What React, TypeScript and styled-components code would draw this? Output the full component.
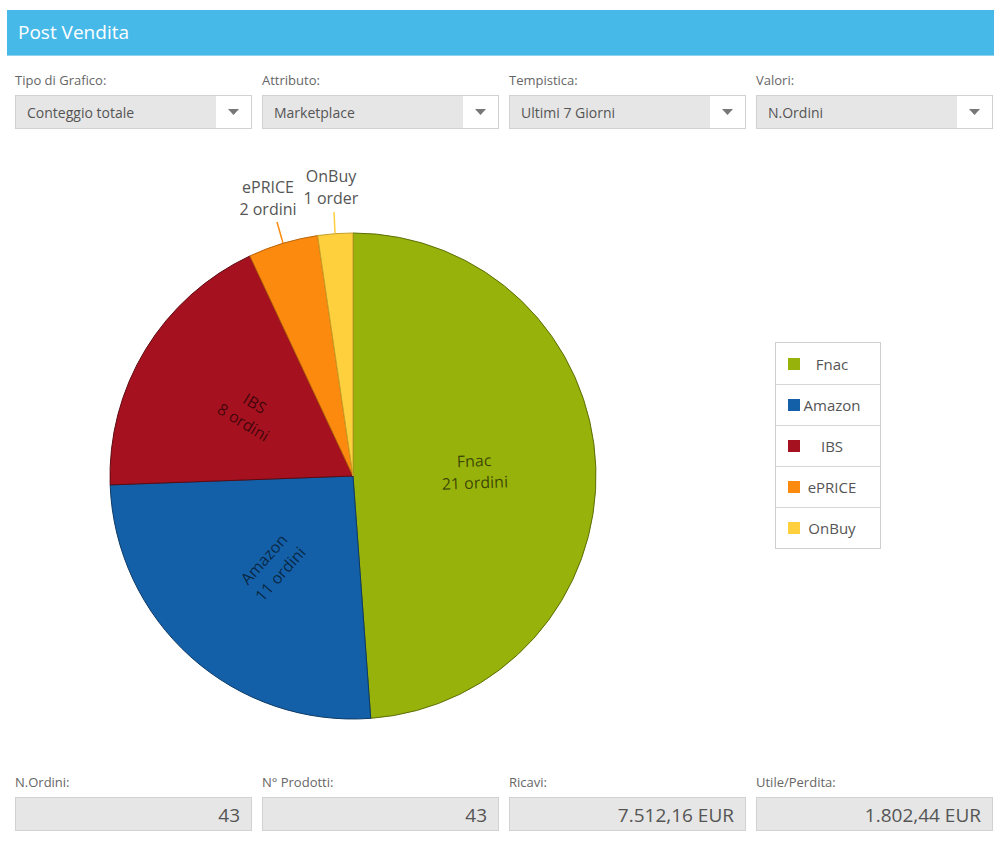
import React from "react";
import styled, { createGlobalStyle } from "styled-components";

const GlobalStyle = createGlobalStyle`
  html, body { margin: 0; padding: 0; background: #ffffff; }
  body { font-family: "Open Sans", "Noto Sans", "Liberation Sans", sans-serif; }
  * { box-sizing: border-box; }
`;

const Page = styled.div`
  width: 1000px;
  height: 848px;
  padding: 10px 6px 0 7px;
  overflow: hidden;
`;

const Header = styled.div`
  height: 46px;
  background: #47b9e8;
  border-bottom: 1px solid #8fd3ef;
  color: #ffffff;
  font-size: 19px;
  line-height: 45px;
  padding-left: 11px;
`;

const FieldGrid = styled.div<{ $top: number }>`
  display: grid;
  grid-template-columns: repeat(4, 1fr);
  column-gap: 10px;
  padding: 0 1px 0 8px;
  margin-top: ${(p) => p.$top}px;
`;

const Field = styled.div`
  display: flex;
  flex-direction: column;
  gap: 6px;
`;

const FieldLabel = styled.div`
  font-size: 13px;
  line-height: 18px;
  color: #666666;
`;

const SelectBox = styled.div`
  height: 34px;
  display: flex;
  border: 1px solid #d2d2d2;
  background: #e6e6e6;
`;

const SelectText = styled.div`
  flex: 1;
  font-size: 14px;
  line-height: 34px;
  color: #555555;
  padding-left: 11px;
`;

const SelectArrow = styled.div`
  width: 35px;
  background: #ffffff;
  display: flex;
  align-items: center;
  justify-content: center;
`;

const ValueBox = styled.div`
  height: 34px;
  border: 1px solid #d2d2d2;
  background: #e6e6e6;
  font-size: 19px;
  line-height: 34px;
  color: #555555;
  text-align: right;
  padding-right: 11px;
`;

const ChartArea = styled.div`
  height: 644px;
  display: flex;
  align-items: flex-start;
`;

const ChartSvg = styled.svg`
  display: block;
  flex: none;
`;

const Legend = styled.div`
  margin-top: 213px;
  margin-left: 28px;
  width: 106px;
  border: 1px solid #cfcfcf;
  display: flex;
  flex-direction: column;
`;

const LegendRow = styled.div`
  height: 41px;
  display: flex;
  align-items: center;
  padding: 0 16px 0 12px;
  border-top: 1px solid #d6d6d6;
  &:first-child { border-top: none; }
`;

const Swatch = styled.span<{ $color: string }>`
  width: 12px;
  height: 12px;
  background: ${(p) => p.$color};
  flex: none;
`;

const LegendText = styled.span`
  flex: 1;
  text-align: center;
  font-size: 15px;
  color: #555555;
`;

type Slice = { name: string; value: number; unit: string; color: string; stroke: string };

const slices: Slice[] = [
  { name: "Fnac", value: 21, unit: "ordini", color: "#97b20b", stroke: "#5d6e06" },
  { name: "Amazon", value: 11, unit: "ordini", color: "#1460a8", stroke: "#0c3a66" },
  { name: "IBS", value: 8, unit: "ordini", color: "#a5111f", stroke: "#5e0a12" },
  { name: "ePRICE", value: 2, unit: "ordini", color: "#fb8a0f", stroke: "#b86308" },
  { name: "OnBuy", value: 1, unit: "order", color: "#fed03d", stroke: "#c7a02a" },
];

const CX = 346;
const CY = 347;
const R = 243;

function pt(theta: number, r: number) {
  const a = (theta * Math.PI) / 180;
  return { x: CX + r * Math.sin(a), y: CY - r * Math.cos(a) };
}

function Arrow() {
  return (
    <svg width="11" height="7" viewBox="0 0 11 7">
      <path d="M0 0 H11 L5.5 6 Z" fill="#777777" />
    </svg>
  );
}

function PieChart() {
  const total = slices.reduce((s, d) => s + d.value, 0);
  let acc = 0;
  const parts = slices.map((d) => {
    const start = (acc / total) * 360;
    acc += d.value;
    const end = (acc / total) * 360;
    return { ...d, start, end };
  });
  const outside: Record<string, { tx: number; ty: number; l1: [number, number]; l2: [number, number] }> = {
    ePRICE: { tx: 261, ty: 64, l1: [276, 114], l2: [270, 93] },
    OnBuy: { tx: 324, ty: 53, l1: [328, 104], l2: [327, 83] },
  };
  return (
    <ChartSvg width={740} height={644} viewBox="0 0 740 644">
      {parts.map((p) => {
        const a = pt(p.start, R);
        const b = pt(p.end, R);
        const large = p.end - p.start > 180 ? 1 : 0;
        const d = `M${CX} ${CY} L${a.x} ${a.y} A${R} ${R} 0 ${large} 1 ${b.x} ${b.y} Z`;
        return <path key={p.name} d={d} fill={p.color} stroke={p.stroke} strokeWidth={1} strokeLinejoin="round" />;
      })}
      {parts.map((p) => {
        const mid = (p.start + p.end) / 2;
        const o = outside[p.name];
        if (o) {
          return (
            <g key={p.name + "l"}>
              <line x1={o.l1[0]} y1={o.l1[1]} x2={o.l2[0]} y2={o.l2[1]} stroke={p.color} strokeWidth={1.5} />
              <text x={o.tx} y={o.ty} textAnchor="middle" fontSize={16} fill="#555555" fontFamily="Open Sans, sans-serif">
                <tspan x={o.tx} dy={0}>{p.name}</tspan>
                <tspan x={o.tx} dy={22}>{`${p.value} ${p.unit}`}</tspan>
              </text>
            </g>
          );
        }
        const c = pt(mid, R / 2);
        let ang = (Math.atan2(c.y - CY, c.x - CX) * 180) / Math.PI;
        if (ang > 90) ang -= 180;
        if (ang < -90) ang += 180;
        return (
          <g key={p.name + "l"} transform={`translate(${c.x} ${c.y}) rotate(${ang})`}>
            <text textAnchor="middle" fontSize={16} fill="rgba(0,0,0,0.62)" fontFamily="Open Sans, sans-serif">
              <tspan x={0} y={-5}>{p.name}</tspan>
              <tspan x={0} y={17}>{`${p.value} ${p.unit}`}</tspan>
            </text>
          </g>
        );
      })}
    </ChartSvg>
  );
}

const filters = [
  { label: "Tipo di Grafico:", value: "Conteggio totale" },
  { label: "Attributo:", value: "Marketplace" },
  { label: "Tempistica:", value: "Ultimi 7 Giorni" },
  { label: "Valori:", value: "N.Ordini" },
];

const stats = [
  { label: "N.Ordini:", value: "43" },
  { label: "N° Prodotti:", value: "43" },
  { label: "Ricavi:", value: "7.512,16 EUR" },
  { label: "Utile/Perdita:", value: "1.802,44 EUR" },
];

export default function App() {
  return (
    <>
      <GlobalStyle />
      <Page>
        <Header>Post Vendita</Header>
        <FieldGrid $top={15}>
          {filters.map((f) => (
            <Field key={f.label}>
              <FieldLabel>{f.label}</FieldLabel>
              <SelectBox>
                <SelectText>{f.value}</SelectText>
                <SelectArrow>
                  <Arrow />
                </SelectArrow>
              </SelectBox>
            </Field>
          ))}
        </FieldGrid>
        <ChartArea>
          <PieChart />
          <Legend>
            {slices.map((s) => (
              <LegendRow key={s.name}>
                <Swatch $color={s.color} />
                <LegendText>{s.name}</LegendText>
              </LegendRow>
            ))}
          </Legend>
        </ChartArea>
        <FieldGrid $top={0}>
          {stats.map((s) => (
            <Field key={s.label}>
              <FieldLabel>{s.label}</FieldLabel>
              <ValueBox>{s.value}</ValueBox>
            </Field>
          ))}
        </FieldGrid>
      </Page>
    </>
  );
}
